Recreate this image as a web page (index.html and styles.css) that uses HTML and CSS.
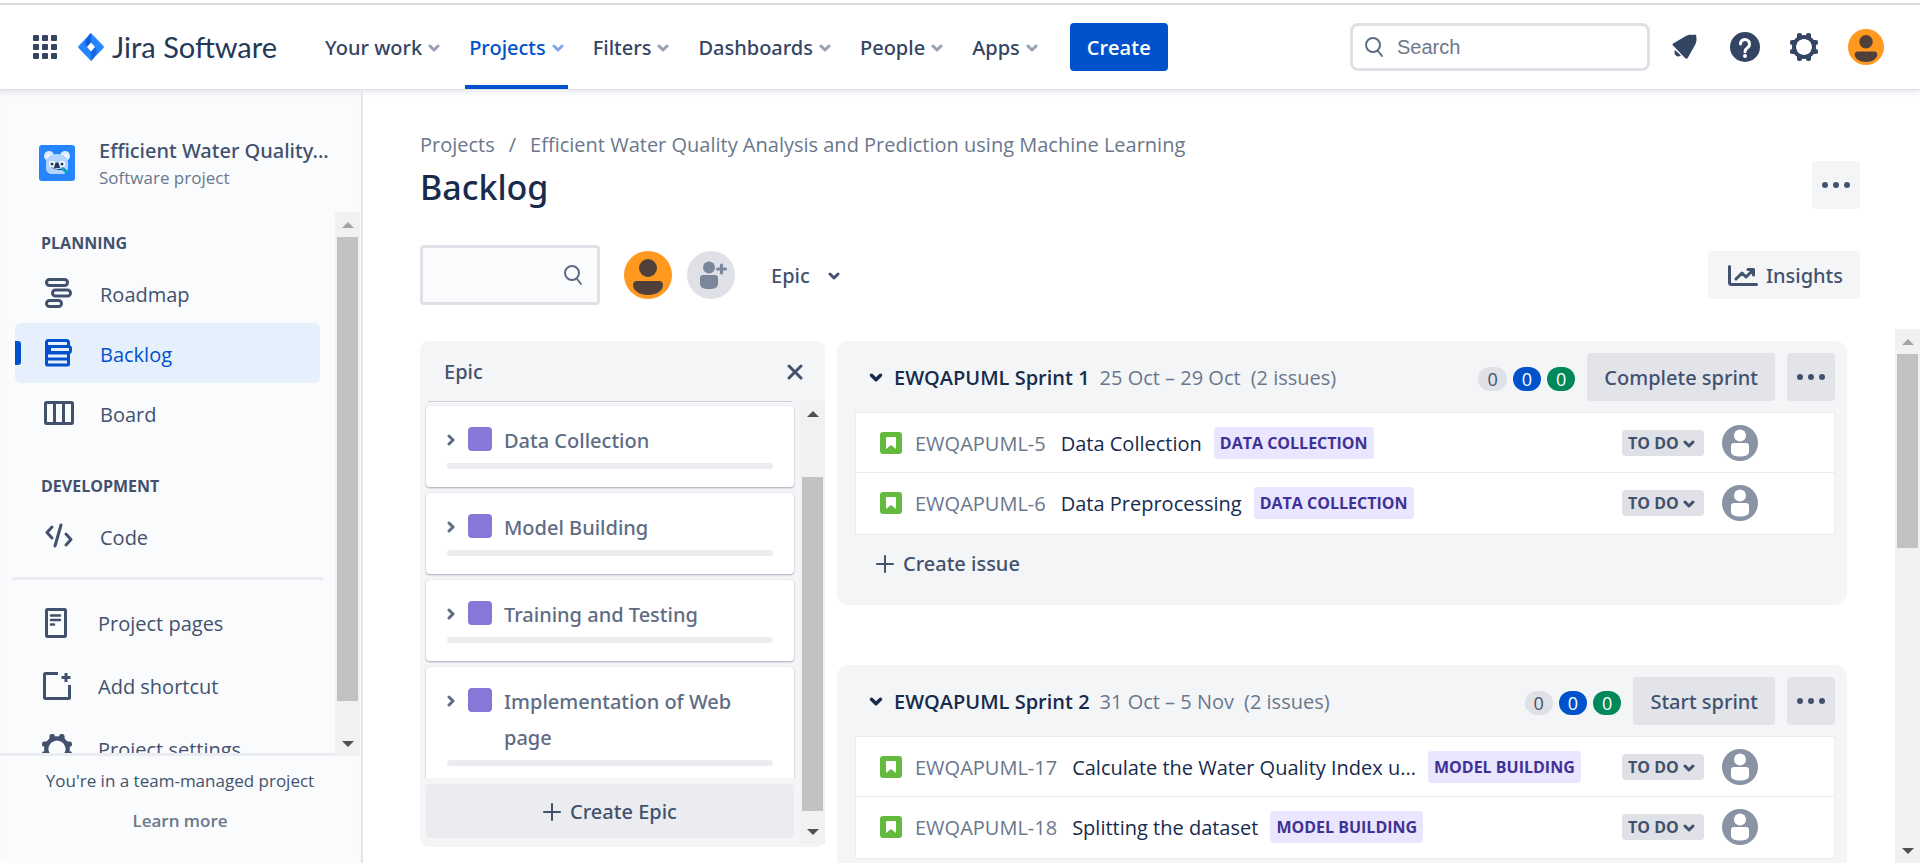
FILE: index.html
```html
<!DOCTYPE html>
<html lang="en">
<head>
<meta charset="utf-8">
<meta name="viewport" content="width=device-width, initial-scale=1">
<title>Backlog - Jira Software</title>
<link rel="stylesheet" href="styles.css">
</head>
<body>
<svg class="sprite" aria-hidden="true">
  <symbol id="chevron" viewBox="0 0 12 8"><path d="M2 2l4 4 4-4" fill="none" stroke="currentColor" stroke-width="3" stroke-linecap="round" stroke-linejoin="round"/></symbol>
  <symbol id="chevron-right" viewBox="0 0 8 12"><path d="M2 2l4 4-4 4" fill="none" stroke="currentColor" stroke-width="3" stroke-linecap="round" stroke-linejoin="round"/></symbol>
  <symbol id="dots" viewBox="0 0 28 6"><g fill="currentColor"><circle cx="3" cy="3" r="3"/><circle cx="14" cy="3" r="3"/><circle cx="25" cy="3" r="3"/></g></symbol>
  <symbol id="plus" viewBox="0 0 18 18"><path d="M9 1v16M1 9h16" stroke="currentColor" stroke-width="2" stroke-linecap="round"/></symbol>
  <symbol id="search" viewBox="0 0 20 22"><g fill="none" stroke="currentColor" stroke-width="2" stroke-linecap="round"><circle cx="9" cy="9" r="7"/><path d="M14 15l4 5"/></g></symbol>
  <symbol id="gear" viewBox="0 0 28 28">
    <g fill="currentColor"><g id="tooth"><rect x="7" y="0" width="5" height="7" rx="2"/><rect x="16" y="0" width="5" height="7" rx="2"/></g>
    <use href="#tooth" transform="rotate(90 14 14)"/><use href="#tooth" transform="rotate(180 14 14)"/><use href="#tooth" transform="rotate(270 14 14)"/></g>
    <circle cx="14" cy="14" r="10" fill="none" stroke="currentColor" stroke-width="4"/>
  </symbol>
  <symbol id="face" viewBox="0 0 48 48"><circle cx="24" cy="24" r="24" fill="#ff991f"/><circle cx="24" cy="17" r="9" fill="#50403a"/><path d="M9 34a4 4 0 0 1 4-4h22a4 4 0 0 1 4 4c0 6-7 10-15 10S9 40 9 34z" fill="#50403a"/></symbol>
  <symbol id="person" viewBox="0 0 36 36"><circle cx="18" cy="18" r="18" fill="#8993a4"/><circle cx="18" cy="10.500" r="6" fill="#fff"/><path d="M9 21a3 3 0 0 1 3-3h12a3 3 0 0 1 3 3v6c0 3-4 4.500-9 4.500S9 30 9 27z" fill="#fff"/></symbol>
  <symbol id="story" viewBox="0 0 22 22"><rect width="22" height="22" rx="3" fill="#63ba3c"/><path d="M7 5h8a1 1 0 0 1 1 1v11l-5-4-5 4V6a1 1 0 0 1 1-1z" fill="#fff"/></symbol>
</svg>

<header class="topbar">
  <button class="plain switcher" aria-label="Switch apps">
    <svg width="24" height="24" viewBox="0 0 24 24" fill="#344563"><rect width="6" height="6" rx="1"/><rect x="9" width="6" height="6" rx="1"/><rect x="18" width="6" height="6" rx="1"/><rect y="9" width="6" height="6" rx="1"/><rect x="9" y="9" width="6" height="6" rx="1"/><rect x="18" y="9" width="6" height="6" rx="1"/><rect y="18" width="6" height="6" rx="1"/><rect x="9" y="18" width="6" height="6" rx="1"/><rect x="18" y="18" width="6" height="6" rx="1"/></svg>
  </button>
  <a class="brand" href="#">
    <svg width="26" height="28" viewBox="0 0 26 28" aria-hidden="true"><path d="M13 0l12 12.500a2 2 0 0 1 0 3L13 28 1 15.500a2 2 0 0 1 0-3z" fill="#2684ff"/><path d="M13 0v9.500l-4 4.500C5.500 10 8 5 13 0z" fill="#0f5fdc"/><path d="M13 28v-9.500l4-4.500c3.500 4 1 9-4 14z" fill="#1868e0"/><path d="M13 9.500l4 4.500-4 4.500L9 14z" fill="#fff"/></svg>
    <span>Jira Software</span>
  </a>
  <nav class="topnav" aria-label="Primary">
    <button class="navbtn">Your work<svg width="12" height="8"><use href="#chevron"/></svg></button>
    <button class="navbtn current">Projects<svg width="12" height="8"><use href="#chevron"/></svg></button>
    <button class="navbtn">Filters<svg width="12" height="8"><use href="#chevron"/></svg></button>
    <button class="navbtn">Dashboards<svg width="12" height="8"><use href="#chevron"/></svg></button>
    <button class="navbtn">People<svg width="12" height="8"><use href="#chevron"/></svg></button>
    <button class="navbtn">Apps<svg width="12" height="8"><use href="#chevron"/></svg></button>
  </nav>
  <button class="primary">Create</button>
  <label class="topsearch">
    <svg width="20" height="22"><use href="#search"/></svg>
    <input type="search" placeholder="Search" aria-label="Search">
  </label>
  <div class="tools">
    <button class="plain" aria-label="Notifications"><svg width="30" height="30" viewBox="0 0 30 30" fill="#344563"><path d="M3 13.500C2 12.500 2.500 11.500 4 11L15 4.500c3-1.800 5-2 8-1.500l1.500-.500c1.500 0 2 1 1.800 2.300.6 3 .2 5.500-1.300 8.200L18 25.500c-.7 1.500-1.800 1.800-3 .5z"/><path d="M5 18l6 5.500c-2 1.500-4 1.200-5.200 0S4 20 5 18z"/></svg></button>
    <button class="plain" aria-label="Help"><svg width="30" height="30" viewBox="0 0 30 30"><circle cx="15" cy="15" r="15" fill="#344563"/><path d="M10.500 12a4.500 4.500 0 1 1 7 3.700c-1.700 1.200-2.500 2-2.500 4" fill="none" stroke="#fff" stroke-width="3" stroke-linecap="round"/><circle cx="15" cy="24" r="2" fill="#fff"/></svg></button>
    <button class="plain dark" aria-label="Settings"><svg width="28" height="28"><use href="#gear"/></svg></button>
    <button class="plain" aria-label="Your profile"><svg width="36" height="36"><use href="#face"/></svg></button>
  </div>
</header>

<div class="shell">
  <aside class="sidebar">
    <div class="project">
      <svg width="36" height="36" viewBox="0 0 36 36" aria-hidden="true"><rect width="36" height="36" rx="3" fill="#2684ff"/><circle cx="10" cy="11" r="5" fill="#deebff"/><circle cx="26" cy="11" r="5" fill="#deebff"/><circle cx="10" cy="12" r="2.500" fill="#fff"/><circle cx="26" cy="12" r="2.500" fill="#fff"/><path d="M7 18c0-6 4-9 11-9s11 3 11 9v5c0 4-3 6-6 6H13c-3 0-6-2-6-6z" fill="#b3d4ff"/><circle cx="13" cy="19" r="3" fill="#fff"/><circle cx="23" cy="19" r="3" fill="#fff"/><circle cx="13" cy="19" r="1.500" fill="#253858"/><circle cx="23" cy="19" r="1.500" fill="#253858"/><path d="M16 19c0-2 4-2 4 0l1 4h-6zM12 22c3 2 9 3 12 1l-1 2c-3 0-8 0-11-3z" fill="#253858"/><path d="M23 23l6 5" stroke="#00a3bf" stroke-width="3"/></svg>
      <div class="project-text"><strong>Efficient Water Quality...</strong><span>Software project</span></div>
    </div>
    <div class="side-scroll">
      <nav class="side-list" aria-label="Project">
        <h2>Planning</h2>
        <a class="side-item" href="#"><svg width="30" height="30" viewBox="0 0 30 30" fill="none" stroke="currentColor" stroke-width="3"><rect x="2.500" y="1.500" width="21" height="6" rx="3"/><rect x="8.500" y="12" width="18" height="6" rx="3"/><rect x="2.500" y="22.500" width="15" height="6" rx="3"/></svg><span>Roadmap</span></a>
        <a class="side-item selected" href="#" aria-current="page"><svg width="30" height="30" viewBox="0 0 30 30" fill="none" stroke="currentColor" stroke-width="3"><rect x="2.500" y="2.500" width="22" height="6" rx="2"/><rect x="5.500" y="8.500" width="21" height="6" rx="2"/><path d="M2.500 7v19a1 1 0 0 0 1 1h20a1 1 0 0 0 1-1V15M2.500 15h22M2.500 21h22"/></svg><span>Backlog</span></a>
        <a class="side-item" href="#"><svg width="30" height="30" viewBox="0 0 30 30" fill="none" stroke="currentColor" stroke-width="3"><rect x="1.500" y="4.500" width="27" height="21" rx="1"/><path d="M10.500 5v20M19.500 5v20"/></svg><span>Board</span></a>
        <h2>Development</h2>
        <a class="side-item" href="#"><svg width="30" height="30" viewBox="0 0 30 30" fill="none" stroke="currentColor" stroke-width="3" stroke-linecap="round" stroke-linejoin="round"><path d="M8 6l-5 5.500L8 17M17 4l-6 21M22 13l5 5.500-5 5.500"/></svg><span>Code</span></a>
        <hr>
        <a class="side-item wide" href="#"><svg width="30" height="30" viewBox="0 0 30 30" fill="none" stroke="currentColor" stroke-width="3" stroke-linecap="round"><rect x="4.500" y="1.500" width="19" height="27" rx="1"/><path d="M9 7.500h9M9 12h9M9 16.500h3" stroke-width="2.500"/></svg><span>Project pages</span></a>
        <a class="side-item wide" href="#"><svg width="30" height="30" viewBox="0 0 30 30" fill="none" stroke="currentColor" stroke-width="3"><path d="M16 2.500H3.500a1 1 0 0 0-1 1v23a1 1 0 0 0 1 1h23a1 1 0 0 0 1-1V14M24 2v9M19.500 6.500h9"/></svg><span>Add shortcut</span></a>
        <a class="side-item wide" href="#"><svg width="30" height="30" viewBox="0 0 28 28"><use href="#gear"/></svg><span>Project settings</span></a>
      </nav>
      <div class="scrollbar" aria-hidden="true"><i class="arrow up idle"></i><i class="track"><i class="thumb side-thumb"></i></i><i class="arrow down"></i></div>
    </div>
    <div class="side-foot"><p>You're in a team-managed project</p><a href="#">Learn more</a></div>
  </aside>

  <main class="main">
    <div class="page-head">
      <div class="heading">
        <nav class="crumbs" aria-label="Breadcrumb"><a href="#">Projects</a><span>/</span><a href="#">Efficient Water Quality Analysis and Prediction using Machine Learning</a></nav>
        <h1>Backlog</h1>
      </div>
      <button class="square light" aria-label="More actions"><svg width="28" height="6"><use href="#dots"/></svg></button>
    </div>
    <div class="toolbar">
      <label class="filter"><input type="search" aria-label="Search backlog"><svg width="20" height="22"><use href="#search"/></svg></label>
      <button class="plain me" aria-label="Filter by me"><svg width="48" height="48"><use href="#face"/></svg></button>
      <button class="plain" aria-label="Add people"><svg width="48" height="48" viewBox="0 0 48 48"><circle cx="24" cy="24" r="24" fill="#dfe1e6"/><g fill="#7a869a"><circle cx="22" cy="16.500" r="6"/><path d="M13 27a3 3 0 0 1 3-3h12a3 3 0 0 1 3 3v6c0 3-3 5-9 5s-9-2-9-5z"/></g><path d="M34.500 14v8M30.500 18h8" stroke="#7a869a" stroke-width="3" stroke-linecap="round"/></svg></button>
      <button class="plain epic-filter" aria-haspopup="true">Epic<svg width="12" height="8"><use href="#chevron"/></svg></button>
      <button class="insights"><svg width="30" height="22" viewBox="0 0 30 22" fill="none" stroke="currentColor" stroke-width="3" stroke-linecap="round" stroke-linejoin="round"><path d="M1.500 1.500v16a2 2 0 0 0 2 2h25M8 14l6-6 4 4 7-7M20 4.500h5.500V10"/></svg>Insights</button>
    </div>

    <div class="board">
      <section class="epics">
        <header><h2>Epic</h2><button class="plain" aria-label="Close"><svg width="16" height="16" viewBox="0 0 16 16"><path d="M2 2l12 12M14 2L2 14" stroke="currentColor" stroke-width="3" stroke-linecap="round"/></svg></button></header>
        <div class="epic-body">
          <div class="epic-col">
            <div class="epic-list">
              <div class="scrolled-edge"></div>
              <article class="epic"><button class="plain" aria-label="Expand"><svg width="8" height="12"><use href="#chevron-right"/></svg></button><i class="swatch"></i><h3>Data Collection</h3><i class="bar"></i></article>
              <article class="epic"><button class="plain" aria-label="Expand"><svg width="8" height="12"><use href="#chevron-right"/></svg></button><i class="swatch"></i><h3>Model Building</h3><i class="bar"></i></article>
              <article class="epic"><button class="plain" aria-label="Expand"><svg width="8" height="12"><use href="#chevron-right"/></svg></button><i class="swatch"></i><h3>Training and Testing</h3><i class="bar"></i></article>
              <article class="epic"><button class="plain" aria-label="Expand"><svg width="8" height="12"><use href="#chevron-right"/></svg></button><i class="swatch"></i><h3>Implementation of Web page</h3><i class="bar"></i></article>
            </div>
            <button class="create-epic"><svg width="18" height="18"><use href="#plus"/></svg>Create Epic</button>
          </div>
          <div class="scrollbar" aria-hidden="true"><i class="arrow up"></i><i class="track"><i class="thumb epic-thumb"></i></i><i class="arrow down"></i></div>
        </div>
      </section>

      <div class="sprints">
        <section class="sprint">
          <header>
            <button class="plain toggle" aria-label="Collapse sprint"><svg width="14" height="9"><use href="#chevron"/></svg></button>
            <h2>EWQAPUML Sprint 1</h2><span class="meta">25 Oct – 29 Oct</span><span class="meta">(2 issues)</span>
            <div class="counts"><b>0</b><b class="blue">0</b><b class="green">0</b></div>
            <button class="action">Complete sprint</button>
            <button class="square" aria-label="Sprint actions"><svg width="28" height="6"><use href="#dots"/></svg></button>
          </header>
          <ul class="issues">
            <li><svg width="22" height="22"><use href="#story"/></svg><a class="key" href="#">EWQAPUML-5</a><span class="summary">Data Collection</span><span class="tag">Data Collection</span>
              <span class="status"><select aria-label="Status of EWQAPUML-5"><option>TO DO</option></select><svg width="12" height="8"><use href="#chevron"/></svg></span><button class="plain" aria-label="Assign"><svg width="36" height="36"><use href="#person"/></svg></button></li>
            <li><svg width="22" height="22"><use href="#story"/></svg><a class="key" href="#">EWQAPUML-6</a><span class="summary">Data Preprocessing</span><span class="tag">Data Collection</span>
              <span class="status"><select aria-label="Status of EWQAPUML-6"><option>TO DO</option></select><svg width="12" height="8"><use href="#chevron"/></svg></span><button class="plain" aria-label="Assign"><svg width="36" height="36"><use href="#person"/></svg></button></li>
          </ul>
          <button class="plain create-issue"><svg width="18" height="18"><use href="#plus"/></svg>Create issue</button>
        </section>
        <section class="sprint">
          <header>
            <button class="plain toggle" aria-label="Collapse sprint"><svg width="14" height="9"><use href="#chevron"/></svg></button>
            <h2>EWQAPUML Sprint 2</h2><span class="meta">31 Oct – 5 Nov</span><span class="meta">(2 issues)</span>
            <div class="counts"><b>0</b><b class="blue">0</b><b class="green">0</b></div>
            <button class="action">Start sprint</button>
            <button class="square" aria-label="Sprint actions"><svg width="28" height="6"><use href="#dots"/></svg></button>
          </header>
          <ul class="issues">
            <li><svg width="22" height="22"><use href="#story"/></svg><a class="key" href="#">EWQAPUML-17</a><span class="summary">Calculate the Water Quality Index u...</span><span class="tag">Model Building</span>
              <span class="status"><select aria-label="Status of EWQAPUML-17"><option>TO DO</option></select><svg width="12" height="8"><use href="#chevron"/></svg></span><button class="plain" aria-label="Assign"><svg width="36" height="36"><use href="#person"/></svg></button></li>
            <li><svg width="22" height="22"><use href="#story"/></svg><a class="key" href="#">EWQAPUML-18</a><span class="summary">Splitting the dataset</span><span class="tag">Model Building</span>
              <span class="status"><select aria-label="Status of EWQAPUML-18"><option>TO DO</option></select><svg width="12" height="8"><use href="#chevron"/></svg></span><button class="plain" aria-label="Assign"><svg width="36" height="36"><use href="#person"/></svg></button></li>
          </ul>
        </section>
      </div>
      <div class="scrollbar" aria-hidden="true"><i class="arrow up idle"></i><i class="track"><i class="thumb page-thumb"></i></i><i class="arrow down"></i></div>
    </div>
  </main>
</div>
</body>
</html>
```

FILE: styles.css
```css
*, *::before, *::after { box-sizing: border-box; }
body {
  margin: 0;
  height: 100vh;
  display: flex;
  flex-direction: column;
  overflow: hidden;
  background: #fff;
  color: #42526e;
  font: 400 20px/24px "Open Sans", "Noto Sans", sans-serif;
}
h1, h2, h3, p, ul { margin: 0; padding: 0; }
a { color: inherit; text-decoration: none; }
button, input, select { font: inherit; color: inherit; }
button { border: 0; padding: 0; cursor: pointer; white-space: nowrap; }
svg { display: block; flex: none; }
.sprite { position: absolute; width: 0; height: 0; }
.plain { background: none; display: flex; align-items: center; }

/* Medium-weight interface text */
.navbtn, .epic-filter, .insights, .epics h2, .epic h3, .create-epic, .action, .create-issue, .project strong, .heading h1 {
  font-family: "Noto Sans", "Open Sans", sans-serif;
  font-weight: 500;
}

/* Top bar */
.topbar {
  flex: none;
  display: flex;
  align-items: center;
  height: 90px;
  padding: 0 36px 0 33px;
  border-bottom: 1px solid #dfe1e6;
  box-shadow: 0 3px 5px #ebecf0;
  position: relative;
}
.topbar::before {
  content: "";
  position: absolute;
  left: 0;
  right: 0;
  top: 3px;
  height: 2px;
  background: #dcdcdc;
}
.topbar > * { margin-top: 4px; }
.switcher { margin-right: 21px; }
.brand { display: flex; align-items: center; gap: 8px; color: #253858; font: 400 29px/32px Lato, sans-serif; white-space: nowrap; }
.topnav { display: flex; align-self: stretch; margin-left: 44px; gap: 21px; }
.navbtn {
  display: flex;
  align-items: center;
  gap: 6px;
  padding: 6px 4px 0;
  background: none;
  border-bottom: 4px solid transparent;
  color: #344563;
}
.navbtn svg { opacity: .5; }
.navbtn.current { color: #0052cc; border-bottom-color: #0052cc; }
.primary { height: 48px; padding: 2px 17px 0; margin-left: 28px; border-radius: 4px; background: #0052cc; color: #fff; font-weight: 600; }
.topsearch {
  display: flex;
  align-items: center;
  gap: 13px;
  width: 300px;
  height: 48px;
  padding: 0 11px;
  margin-left: auto;
  border: 3px solid #dfe1e6;
  border-radius: 8px;
  color: #5e6c84;
}
.topsearch input { width: 100%; min-width: 0; border: 0; padding: 0; outline: 0; background: none; font: 20px/24px "Liberation Sans", sans-serif; }
.topsearch input::placeholder { color: #6b778c; opacity: 1; }
.tools { display: flex; align-items: center; gap: 30px; margin-left: 20px; }
.dark { color: #344563; }

.shell { flex: 1; min-height: 0; display: flex; }

/* Sidebar */
.sidebar { flex: none; width: 363px; display: flex; flex-direction: column; padding-right: 1px; background: #fafbfc; border-right: 2px solid #e4e6ea; box-shadow: inset 0 4px 4px -2px #e4e6ea; }
.project { display: flex; gap: 24px; align-items: center; height: 122px; padding: 24px 24px 0 39px; }
.project-text { display: flex; flex-direction: column; gap: 3px; min-width: 0; padding-top: 2px; }
.project strong { white-space: nowrap; }
.project span { font-size: 17px; color: #6b778c; }
.side-scroll { flex: 1; min-height: 0; display: flex; }
.side-list { flex: 1; display: flex; flex-direction: column; padding: 19px 12px 0; overflow: hidden; border-bottom: 3px solid #ebecf0; }
.side-list h2 { flex: none; padding-left: 29px; font-size: 16px; line-height: 24px; font-weight: 700; text-transform: uppercase; margin-bottom: 8px; }
.side-list .side-item + h2 { margin-top: 31px; }
.side-item { flex: none; display: flex; align-items: center; gap: 26px; height: 60px; margin: 0 3px; padding-left: 29px; border-radius: 6px; }
.side-item span { padding-top: 3px; }
.side-item.selected { background: #e6effc; color: #0052cc; position: relative; }
.side-item.selected::before { content: ""; position: absolute; left: 0; top: 18px; width: 6px; height: 24px; border-radius: 0 3px 3px 0; background: #0052cc; }
.side-item.wide { height: 63px; padding-left: 27px; }
.side-list hr { flex: none; width: 100%; height: 3px; margin: 11px 0; border: 0; background: #ebecf0; }
.side-foot { flex: none; height: 107px; padding: 13px 0 0; text-align: center; font-size: 17px; }
.side-foot p { margin-bottom: 16px; }
.side-foot a { font-weight: 600; color: #6b778c; }

/* Drawn scrollbars */
.scrollbar { flex: none; width: 25px; display: flex; flex-direction: column; background: #f1f1f1; }
.arrow { flex: none; height: 25px; display: grid; place-items: center; color: #505050; }
.arrow::before { content: ""; border: 6px solid transparent; border-top-width: 0; border-bottom: 6px solid currentColor; }
.arrow.down::before { border-bottom-width: 0; border-top: 6px solid currentColor; }
.arrow.idle { color: #a3a3a3; }
.track { flex: 1; display: block; padding: 0 2px; }
.thumb { display: block; height: 100%; background: #c1c1c1; }
.side-thumb { height: 94%; }
.epic-thumb { height: 85%; margin-top: 51px; }
.page-thumb { height: 40%; }

/* Page */
.main { flex: 1; min-width: 0; display: flex; flex-direction: column; }
.page-head { display: flex; justify-content: space-between; align-items: flex-end; padding: 43px 60px 0 57px; }
.crumbs { display: flex; gap: 14px; color: #6b778c; }
.heading h1 { margin-top: 8px; font-size: 34px; line-height: 44px; color: #172b4d; }
.square { display: grid; place-items: center; flex: none; width: 48px; height: 48px; border-radius: 4px; background: #e2e4e9; color: #42526e; }
.square.light { background: #f4f5f7; }
.toolbar { display: flex; align-items: center; padding: 36px 60px 24px 57px; }
.filter { display: flex; align-items: center; width: 180px; height: 60px; padding: 0 14px; border: 3px solid #dfe1e6; border-radius: 4px; background: #fafbfc; color: #5e6c84; }
.filter input { flex: 1; min-width: 0; border: 0; outline: 0; background: none; }
.me { margin: 0 15px 0 24px; }
.epic-filter { margin-left: 36px; padding-top: 2px; gap: 18px; }
.insights { display: flex; align-items: center; gap: 8px; height: 48px; margin-left: auto; padding: 2px 17px 0 20px; border-radius: 4px; background: #f4f5f7; }

.board { flex: 1; min-height: 0; display: flex; padding-left: 57px; }
.epics { flex: none; width: 405px; margin: 12px 0 16px; display: flex; flex-direction: column; background: #f4f5f7; border-radius: 9px; }
.epics header { flex: none; display: flex; align-items: center; justify-content: space-between; height: 60px; padding: 2px 22px 0 24px; }
.epics h2 { font-size: 20px; }
.epic-body { flex: 1; min-height: 0; display: flex; padding-bottom: 3px; }
.epic-col { flex: 1; min-width: 0; display: flex; flex-direction: column; padding: 0 6px; }
.epic-list { flex: 1; min-height: 0; display: flex; flex-direction: column; gap: 6px; margin: 0 -2px; padding: 0 2px; overflow: hidden; }
.epic {
  flex: none;
  display: grid;
  grid-template-columns: 9px 24px 1fr;
  column-gap: 12px;
  row-gap: 4px;
  padding: 17px 21px 18px;
  border-radius: 4px;
  background: #fff;
  box-shadow: 0 1px 2px #a5adba, 0 0 1px #c1c7d0;
  color: #5e6c84;
}
.scrolled-edge { flex: none; height: 1px; margin: 0 2px -2px; background: #cdd1d8; }
.epic .plain { height: 33px; }
.swatch { width: 24px; height: 24px; margin-top: 4px; border-radius: 4px; background: #8777d9; }
.epic h3 { font-size: 20px; line-height: 36px; }
.bar { grid-column: 1 / -1; height: 6px; border-radius: 3px; background: #ebecf0; }
.create-epic { flex: none; display: flex; align-items: center; justify-content: center; gap: 9px; height: 54px; margin: 6px 0; padding-top: 2px; border-radius: 4px; background: #ebecf0; }

.sprints { flex: 1; min-width: 0; overflow: hidden; display: flex; flex-direction: column; gap: 60px; padding: 12px 48px 0 12px; }
.sprint { flex: none; padding: 12px 12px 13px 18px; border-radius: 12px; background: #f4f5f7; }
.sprint header { display: flex; align-items: center; }
.toggle { margin: 0 11px 0 14px; color: #172b4d; }
.sprint h2 { padding-top: 2px; font-size: 20px; font-weight: 600; color: #172b4d; white-space: nowrap; }
.meta { padding-top: 2px; margin-left: 10px; color: #6b778c; white-space: nowrap; }
.counts { display: flex; gap: 6px; margin: 3px 12px 0 auto; }
.counts b { padding: 0 9px; border-radius: 12px; background: #dfe1e6; font-size: 18px; font-weight: 400; }
.counts .blue { background: #0052cc; color: #fff; }
.counts .green { background: #00875a; color: #fff; }
.action { height: 48px; margin-right: 12px; padding: 2px 17px 0; border-radius: 4px; background: #e2e4e9; }
.issues { list-style: none; margin-top: 11px; border: 1px solid #ebecf0; background: #fff; }
.issues li { display: flex; align-items: center; height: 60px; padding: 0 76px 0 24px; border-bottom: 1px solid #ebecf0; white-space: nowrap; }
.issues li:last-child { height: 61px; padding-bottom: 2px; border-bottom: 0; }
.key { margin: 0 15px 0 13px; padding-top: 2px; color: #6b778c; }
.summary { color: #172b4d; margin-right: 12px; padding-top: 2px; overflow: hidden; text-overflow: ellipsis; }
.tag { padding: 4px 6px; border-radius: 4px; background: #eae6ff; color: #403294; font-size: 16px; font-weight: 700; text-transform: uppercase; }
.status { position: relative; margin: 0 18px 0 auto; }
.status select { display: block; width: 82px; height: 26px; padding: 0 6px; appearance: none; border: 0; border-radius: 4px; background: #dfe1e6; font-size: 16px; font-weight: 700; }
.status svg { position: absolute; right: 9px; top: 10px; pointer-events: none; }
.create-issue { gap: 9px; height: 57px; margin-left: 21px; }
```
